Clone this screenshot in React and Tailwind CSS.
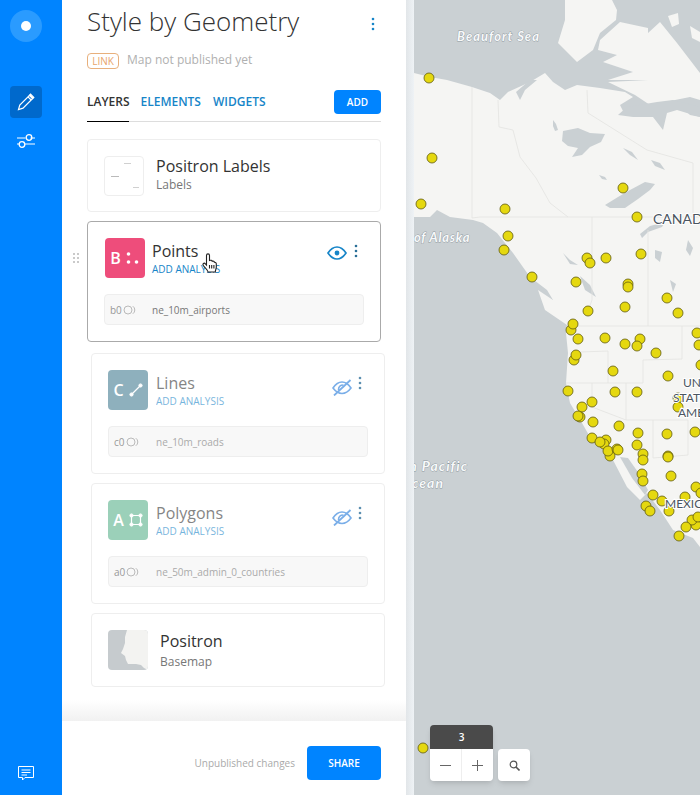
const AIRPORTS = [
  [429, 78], [432, 158], [421, 204], [505, 209], [508, 236], [504, 250], [532, 277], [576, 282],
  [587, 258], [590, 263], [606, 258], [641, 254], [637, 217], [623, 188], [628, 284], [628, 287],
  [667, 298], [625, 307], [588, 311], [678, 313], [571, 330], [573, 324], [578, 339], [605, 338],
  [640, 339], [625, 344], [637, 346], [656, 353], [697, 333], [699, 345], [701, 365], [574, 360],
  [576, 355], [613, 371], [668, 376], [568, 391], [615, 392], [637, 392], [678, 398], [678, 407],
  [592, 402], [582, 407], [580, 417], [578, 416], [593, 422], [619, 426], [638, 433], [667, 434],
  [695, 432], [592, 438], [606, 440], [604, 444], [600, 442], [610, 456], [608, 451], [617, 449],
  [618, 450], [637, 445], [643, 454], [643, 460], [668, 456], [668, 457], [642, 474], [643, 481],
  [671, 476], [696, 487], [701, 493], [685, 497], [653, 495], [662, 501], [646, 506], [650, 511],
  [669, 511], [696, 525], [692, 520], [698, 517], [686, 527], [679, 536], [423, 748],
]

const LAKES = [
  '563,131 578,128 590,133 605,134 601,142 590,147 582,155 572,157 578,148 568,146 562,141',
  '605,205 618,197 630,190 645,182 655,184 650,190 638,199 625,208 610,208',
  '640,234 650,226 665,222 662,227 648,232 642,238',
  '553,120 556,124 558,130 555,131 553,126',
  '599,175 605,177 607,180 602,179',
  '623,148 632,152 638,160 630,155',
  '651,160 660,163 665,170 655,166',
  '563,253 570,260 578,265 570,264',
  '655,250 662,252 660,262 655,258',
  '688,240 693,248 690,256 686,250',
  '618,115 627,107 657,102 673,100 700,107 700,117 677,110 667,113 663,130 653,117 633,117',
  '516,92 530,80 537,80 525,90 520,100',
  '580,276 590,285 596,297 585,290',
  '670,280 676,284 673,292',
]

const BORDERS = [
  '472,87 472,218 480,217 700,217',
  '498,100 499,127 513,130 520,157 536,178 550,203 568,217',
  '587,90 588,113 647,150 693,163 693,217',
  '592,217 592,300 588,311',
  '648,230 648,326',
  '567,326 700,326',
  '580,352 608,351 608,383',
  '566,383 643,383 643,360 682,359 682,326',
  '592,383 592,407 626,420 626,383',
  '626,420 653,420 653,458 688,455',
  '653,420 688,420 688,455',
]

function MapCanvas() {
  return (
    <svg viewBox="414 0 286 795" className="block w-full h-full">
      <rect x="414" y="0" width="286" height="795" fill="#cad0d3" />
      <g fill="#f5f5f3">
        <polygon points="414,73 430,77 447,80 472,87 490,93 500,100 508,92 530,82 545,73 553,82 565,90 577,85 600,88 625,92 633,97 620,105 625,115 650,105 660,103 680,105 690,115 700,117 700,547 693,538 673,530 660,510 647,493 640,500 627,487 613,460 607,453 590,437 582,423 570,403 566,383 568,353 566,333 567,325 545,310 538,290 553,300 547,290 530,277 513,253 497,233 483,223 473,220 450,217 437,210 430,217 414,217" />
        <polygon points="565,0 612,0 617,10 616,20 600,33 593,50 577,62 558,43 565,20" />
        <polygon points="600,40 620,22 648,28 648,80 608,80 633,72 603,62 617,55 598,50" />
        <polygon points="648,33 660,22 677,43 700,73 700,100 690,97 650,105 635,95 608,82 648,80" />
        <polygon points="668,16 678,13 679,24 672,27" />
        <polygon points="690,26 700,32 700,42 692,38" />
      </g>
      <polygon points="620,457 628,458 640,475 648,490 645,495 632,478" fill="#cad0d3" />
      <g fill="#cad0d3">
        {LAKES.map((p) => <polygon key={p} points={p} />)}
      </g>
      <g fill="none" stroke="#e3e3e1" strokeWidth="0.8">
        {BORDERS.map((p) => <polyline key={p} points={p} />)}
      </g>
      <g fontFamily="Lato, sans-serif" fontStyle="italic" fontWeight="700" fontSize="13" letterSpacing="1" fill="#f7f9fa" stroke="#8f999f" strokeWidth="0.8" paintOrder="stroke">
        <text x="457" y="41">Beaufort Sea</text>
        <text x="414" y="242" letterSpacing="0.7">of Alaska</text>
        <text x="468" y="471" textAnchor="end" fontSize="14">North Pacific</text>
        <text x="444" y="488" textAnchor="end" fontSize="14">Ocean</text>
      </g>
      <g>
        {AIRPORTS.map(([x, y], i) => (
          <circle key={i} cx={x} cy={y} r="5" fill="#e5d80f" stroke="#5f5a10" strokeWidth="0.8" />
        ))}
      </g>
      <g fontFamily="Lato, sans-serif" fontSize="12" fill="#4b5560" stroke="#ffffff" strokeWidth="2" paintOrder="stroke">
        <text x="653" y="224" fontSize="14">CANADA</text>
        <text x="683" y="387">UNITED</text>
        <text x="673" y="402">STATES</text>
        <text x="678" y="417">AMERICA</text>
        <text x="665" y="508">MEXICO</text>
      </g>
    </svg>
  )
}

function Kebab({ className }) {
  return (
    <svg width="4" height="14" viewBox="0 0 4 14" className={className}>
      <circle cx="2" cy="2" r="1.3" fill="currentColor" />
      <circle cx="2" cy="7" r="1.3" fill="currentColor" />
      <circle cx="2" cy="12" r="1.3" fill="currentColor" />
    </svg>
  )
}

function EyeOpen() {
  return (
    <svg width="20" height="14" viewBox="0 0 20 14" fill="none" stroke="#1785c8" strokeWidth="1.7">
      <path d="M1 7 C4 2.5 7 1 10 1 C13 1 16 2.5 19 7 C16 11.5 13 13 10 13 C7 13 4 11.5 1 7 Z" />
      <circle cx="10" cy="7" r="2.4" fill="#1785c8" stroke="none" />
    </svg>
  )
}

function EyeOff() {
  return (
    <svg width="20" height="17" viewBox="0 0 20 17" fill="none" stroke="#7aaee8" strokeWidth="1.6">
      <path d="M1 9 C4 4.5 7 3 10 3 C13 3 16 4.5 19 9 C16 13 13 14.5 10 14.5 C7 14.5 4 13 1 9 Z" />
      <path d="M2 16.5 L18.5 1" strokeWidth="1.8" />
      <path d="M6.5 11 C6.5 7.5 9 6 11.5 6" />
    </svg>
  )
}

function PointsGlyph() {
  return (
    <svg width="14" height="14" viewBox="0 0 14 14" fill="#ffffff">
      <circle cx="2.5" cy="3" r="1.8" />
      <circle cx="2.5" cy="11" r="1.8" />
      <circle cx="10.5" cy="11" r="1.8" />
    </svg>
  )
}

function LineGlyph() {
  return (
    <svg width="14" height="14" viewBox="0 0 14 14" fill="#ffffff" stroke="#ffffff">
      <circle cx="2.5" cy="11.5" r="1.6" />
      <circle cx="11.5" cy="2.5" r="1.6" />
      <path d="M2.5 11.5 L11.5 2.5" strokeWidth="1.2" />
    </svg>
  )
}

function PolygonGlyph() {
  return (
    <svg width="14" height="14" viewBox="0 0 14 14" fill="#ffffff" stroke="#ffffff">
      <path d="M2.5 2.5 H11.5 V11.5 H2.5 Z" fill="none" strokeWidth="1.2" />
      <circle cx="2.5" cy="2.5" r="1.6" />
      <circle cx="11.5" cy="2.5" r="1.6" />
      <circle cx="2.5" cy="11.5" r="1.6" />
      <circle cx="11.5" cy="11.5" r="1.6" />
    </svg>
  )
}

function RingPair() {
  return (
    <svg width="14" height="10" viewBox="0 0 14 10" fill="none" stroke="#aaaaaa" strokeWidth="0.8">
      <circle cx="5" cy="5" r="4" />
      <path d="M9.8 1.2 A4.6 4.6 0 0 1 9.8 8.8" />
    </svg>
  )
}

function LabelsThumb() {
  return (
    <div className="w-10 h-10 shrink-0 rounded border border-[#eeeeee] bg-white">
      <svg width="38" height="38" viewBox="0 0 38 38" stroke="#c4c4c4" strokeWidth="0.8">
        <path d="M19 6.5 H26" />
        <path d="M6 19.5 H14" stroke="#a8a8a8" />
        <path d="M28 30.5 H34" />
      </svg>
    </div>
  )
}

function BasemapThumb() {
  return (
    <div className="w-10 h-10 shrink-0 rounded overflow-hidden">
      <svg width="40" height="40" viewBox="0 0 40 40" className="block">
        <rect width="40" height="40" fill="#c6cbce" />
        <path d="M19 0 H40 V40 L36 38 L33 35 L28 34 L20 34 L18 30 L17 26 L13 23 L15 19 L17 13 L17 7 Z" fill="#f3f3f1" />
      </svg>
    </div>
  )
}

function LayerCard({ letter, glyph, color, name, source, sourceId, visible, className }) {
  return (
    <div className={`rounded border pt-4 pb-4 px-4 h-[121px] ${className}`}>
      <div className="flex items-start">
        <div className={`w-10 h-10 rounded flex items-center justify-center gap-[5px] shrink-0 ${color} ${visible ? 'ml-[1px]' : ''}`}>
          <span className="text-white text-base font-semibold leading-none">{letter}</span>
          {glyph}
        </div>
        <div className={`flex-1 ${visible ? 'ml-[7px]' : 'ml-2 opacity-60'}`}>
          <div className="text-base leading-[22px] text-[#333333] mt-[2px]">{name}</div>
          <div className="text-[10px] leading-[14px] text-[#1785c8]">ADD ANALYSIS</div>
        </div>
        {visible ? (
          <div className="flex items-start gap-[7px] mr-[6px] mt-[8px]">
            <EyeOpen />
            <Kebab className="text-[#2a6f97] -mt-[2px]" />
          </div>
        ) : (
          <div className="flex items-start gap-[6px] mr-[6px] mt-[9px]">
            <EyeOff />
            <Kebab className="text-[#5c8fb0] -mt-[3px]" />
          </div>
        )}
      </div>
      <div className={`mt-4 h-[31px] pt-[1px] rounded border border-[#eeeeee] bg-[#f8f8f8] flex items-center text-[10px] ${visible ? 'text-[#777777]' : 'text-[#aaaaaa]'}`}>
        <span className="w-[47px] pl-[5px] flex items-center gap-[1px] text-[#999999]">
          {sourceId}
          <RingPair />
        </span>
        <span>{source}</span>
      </div>
    </div>
  )
}

function SimpleCard({ thumb, title, subtitle, className, textClass, subClass }) {
  return (
    <div className={`rounded border border-[#eeeeee] bg-white px-4 flex items-center ${className}`}>
      {thumb}
      <div className={`ml-3 ${textClass}`}>
        <div className="text-base leading-[22px] text-[#333333]">{title}</div>
        <div className={`text-xs leading-[16px] text-[#777777] ${subClass}`}>{subtitle}</div>
      </div>
    </div>
  )
}

function Sidebar() {
  return (
    <aside className="w-[62px] shrink-0 bg-[#0084ff] flex flex-col items-start pl-[10px]">
      <div className="mt-[10px] w-8 h-8 rounded-full bg-[#2a9bff] flex items-center justify-center">
        <div className="w-[10px] h-[10px] rounded-full bg-white" />
      </div>
      <div className="mt-11 w-8 h-8 rounded bg-[#0069cc] flex items-center justify-center">
        <svg width="18" height="18" viewBox="0 0 18 18" fill="none" stroke="#ffffff" strokeWidth="1.2">
          <path d="M1.5 16.5 L2.8 12 L12.5 2.3 L15.7 5.5 L6 15.2 Z" />
          <path d="M11 3.8 L14.2 7" />
          <path d="M13.6 1.2 L16.8 4.4 L15.7 5.5 L12.5 2.3 Z" fill="#ffffff" />
        </svg>
      </div>
      <div className="mt-[15px] ml-[7px]">
        <svg width="18" height="16" viewBox="0 0 18 16" fill="none" stroke="#ffffff" strokeWidth="1.3" className="block">
          <path d="M0 5 H8.5 M13.5 5 H18" strokeWidth="1" />
          <circle cx="12" cy="4.5" r="2.8" />
          <path d="M0 11 H2.5 M7.5 11 H18" strokeWidth="1" />
          <circle cx="5" cy="11.5" r="2.8" />
        </svg>
      </div>
      <div className="mt-auto mb-[14px] ml-[8px]">
        <svg width="16" height="15" viewBox="0 0 16 15" fill="none" stroke="#ffffff" strokeWidth="1" className="block">
          <path d="M0.5 0.5 H15.5 V11.5 H7 L4.5 14 V11.5 H0.5 Z" />
          <path d="M3.5 4 H12.5 M3.5 6.5 H12.5 M3.5 9 H9" />
        </svg>
      </div>
    </aside>
  )
}

function Panel() {
  return (
    <main className="w-[344px] shrink-0 bg-white flex flex-col h-full">
      <div className="flex-1 pl-[25px] pr-[25px] min-h-0">
        <div className="flex items-start justify-between h-[46px]">
          <h1 className="text-[26px] leading-[42px] font-light text-[#333333]">Style by Geometry</h1>
          <Kebab className="text-[#1785c8] mt-[17px] mr-[6px]" />
        </div>
        <div className="flex items-center mt-[6px] h-[17px]">
          <span className="h-[16px] w-[32px] rounded-sm border border-[#e8b07c] text-[#e8a56c] text-[10px] leading-[15px] text-center">LINK</span>
          <span className="ml-2 text-xs text-[#b0b0b0] -mt-[2px]">Map not published yet</span>
        </div>
        <div className="flex items-center justify-between mt-[21px] h-[24px]">
          <div className="flex gap-3 text-xs font-semibold text-[#1785c8]">
            <span className="text-[#333333] -mr-[1px]">LAYERS</span>
            <span>ELEMENTS</span>
            <span>WIDGETS</span>
          </div>
          <button className="w-[47px] h-[24px] rounded bg-[#0084ff] text-white text-[10px] font-semibold">ADD</button>
        </div>
        <div className="mt-[7px] h-[1px] bg-[#dddddd] relative">
          <div className="absolute left-0 top-0 w-[42px] h-[1px] bg-black" />
        </div>
        <div className="mt-[17px] flex flex-col gap-[9px]">
          <SimpleCard
            className="h-[73px]"
            textClass="-mt-[4px]"
            thumb={<LabelsThumb />}
            title="Positron Labels"
            subtitle="Labels"
          />
          <div className="relative">
            <svg width="6" height="10" viewBox="0 0 6 10" fill="#b8b8b8" className="absolute -left-[14px] top-[32px]">
              <circle cx="1" cy="1" r="1" /><circle cx="5" cy="1" r="1" />
              <circle cx="1" cy="5" r="1" /><circle cx="5" cy="5" r="1" />
              <circle cx="1" cy="9" r="1" /><circle cx="5" cy="9" r="1" />
            </svg>
            <LayerCard
              className="border-[#aaaaaa] bg-white"
              letter="B"
              glyph={<PointsGlyph />}
              color="bg-[#ee4d7b]"
              name="Points"
              sourceId="b0"
              source="ne_10m_airports"
              visible
            />
            <svg width="15" height="20" viewBox="0 0 15 20" fill="#ffffff" stroke="#222222" strokeWidth="1.1" className="absolute left-[115px] top-[32px]">
              <path d="M4.5 10 V2.5 C4.5 0.3 7.5 0.3 7.5 2.5 V7.5 C9 6.8 10 7.5 10.2 8.3 C11.2 7.8 12.3 8.3 12.4 9.3 C13.4 9 14.3 10 14.3 11 V14 C14.3 16 13.3 17 13.3 19 H6 C6 17 3 15 1.3 12.5 C0.3 11 2 9.3 3.4 10.8 L4.5 12 Z" />
              <path d="M7.5 12 V15.5 M9.7 12 V15.5 M11.9 12 V15.5" />
            </svg>
          </div>
          <LayerCard
            className="border-[#eeeeee] bg-white ml-1 w-[294px] mt-[2px]"
            letter="C"
            glyph={<LineGlyph />}
            color="bg-[#8eb0bd]"
            name="Lines"
            sourceId="c0"
            source="ne_10m_roads"
          />
          <LayerCard
            className="border-[#eeeeee] bg-white ml-1 w-[294px]"
            letter="A"
            glyph={<PolygonGlyph />}
            color="bg-[#9bd0b9]"
            name="Polygons"
            sourceId="a0"
            source="ne_50m_admin_0_countries"
          />
          <SimpleCard
            className="h-[74px] ml-1 w-[294px]"
            subClass="mt-[2px]"
            thumb={<BasemapThumb />}
            title="Positron"
            subtitle="Basemap"
          />
        </div>
      </div>
      <div className="h-[21px] shrink-0 bg-gradient-to-b from-white to-[#f1f1f1]" />
      <div className="h-[74px] shrink-0 bg-white flex items-center justify-end gap-3 pr-[25px] pt-[10px]">
        <span className="text-[10px] text-[#aaaaaa]">Unpublished changes</span>
        <button className="w-[74px] h-[34px] rounded bg-[#0084ff] text-white text-[10px] font-semibold">SHARE</button>
      </div>
    </main>
  )
}

function ZoomControls() {
  return (
    <div className="absolute left-[16px] top-[725px] flex items-end gap-[5px]">
      <div className="w-[63px] rounded shadow-md">
        <div className="h-[25px] rounded-t bg-[#4a4a4a] text-white text-[10px] font-semibold leading-[25px] text-center">3</div>
        <div className="h-[32px] rounded-b bg-white flex -mt-[1px] relative">
          <div className="w-1/2 flex items-center justify-center border-r border-[#eeeeee]">
            <svg width="11" height="11" viewBox="0 0 11 11" stroke="#666666" strokeWidth="1"><path d="M0 5.5 H11" /></svg>
          </div>
          <div className="w-1/2 flex items-center justify-center">
            <svg width="11" height="11" viewBox="0 0 11 11" stroke="#666666" strokeWidth="1"><path d="M0 5.5 H11 M5.5 0 V11" /></svg>
          </div>
        </div>
      </div>
      <div className="w-8 h-8 rounded bg-white shadow-md flex items-center justify-center">
        <svg width="11" height="11" viewBox="0 0 11 11" fill="none" stroke="#555555" strokeWidth="1.2">
          <circle cx="4.5" cy="4.5" r="3.3" />
          <path d="M7 7 L10.5 10.5" strokeWidth="1.6" />
        </svg>
      </div>
    </div>
  )
}

export default function App() {
  return (
    <div className="flex w-[700px] h-[795px] overflow-hidden bg-white font-['Open_Sans',sans-serif]">
      <Sidebar />
      <Panel />
      <div className="w-[8px] shrink-0 bg-gradient-to-r from-[#e2e6e9] to-[#eef2f5]" />
      <div className="relative flex-1 h-full overflow-hidden">
        <MapCanvas />
        <ZoomControls />
      </div>
    </div>
  )
}
